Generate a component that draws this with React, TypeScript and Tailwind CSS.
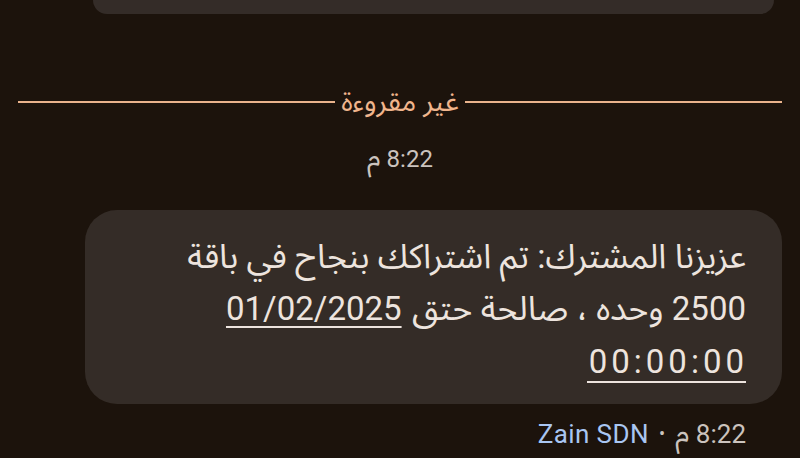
import React from 'react';

const arabicFont = "font-['Roboto','Noto_Sans_Arabic','DejaVu_Sans',sans-serif]";

// spread the characters a little, the phone's font has wider digits
const Spread: React.FC<{ text: string }> = ({ text }) => (
  <>
    {text.split('').map((ch, i) => (
      <span key={i} className="px-[2px]">
        {ch}
      </span>
    ))}
  </>
);

const App: React.FC = () => {
  return (
    <div className={`w-[800px] h-[458px] overflow-hidden bg-[#1c130c] flex flex-col ${arabicFont}`}>
      {/* previous message, cut off at the top */}
      <div className="h-[14px] ml-[93px] mr-[26px] rounded-b-[28px] bg-[#342c28]" />

      {/* unread divider */}
      <div className="mt-[74px] px-[18px] flex items-center" dir="rtl">
        <div className="flex-1 h-[2px] bg-[#eab38c]" />
        <span className="px-[6px] text-[28px] leading-[28px] text-[#f0b58c]">غير مقروءة</span>
        <div className="flex-1 h-[2px] bg-[#eab38c]" />
      </div>

      {/* time stamp */}
      <div className="mt-[28px] text-center text-[24px] leading-[28px] tracking-[0.6px] text-[#cbc3be]" dir="rtl">
        8:22 <span className="text-[28px]">م</span>
      </div>

      {/* message bubble */}
      <div
        className="mt-[37px] ml-[85px] mr-[18px] h-[194px] rounded-[32px] bg-[#342c27] pr-[36px] pl-[30px] pt-[20px]"
        dir="rtl"
      >
        <p className="text-[34px] leading-[52px] text-[#ede4de]">
          عزيزنا المشترك: تم اشتراكك بنجاح في باقة
          <br />
          <span className="text-[33px]">2500</span> وحده ، صالحة حتق{' '}
          <span className="text-[33px] px-[2px] underline decoration-2 underline-offset-[6px]">01/02/2025</span>
          <br />
          <span
            className="inline-block text-[33px] leading-[38px] border-b-2 border-[#ede4de]"
            dir="ltr"
          >
            <Spread text="00:00:00" />
          </span>
        </p>
      </div>

      {/* sender + time */}
      <div className="mt-[14px] pr-[54px] flex items-center gap-[10px] text-[26px] leading-[30px] tracking-[0.4px]" dir="rtl">
        <span className="text-[#cbc3be]">
          8:22 <span className="text-[29px]">م</span>
        </span>
        <span className="text-[#cbc3be] text-[18px]">•</span>
        <span className="text-[#a9c6f2]" dir="ltr">Zain SDN</span>
      </div>
    </div>
  );
};

export default App;
